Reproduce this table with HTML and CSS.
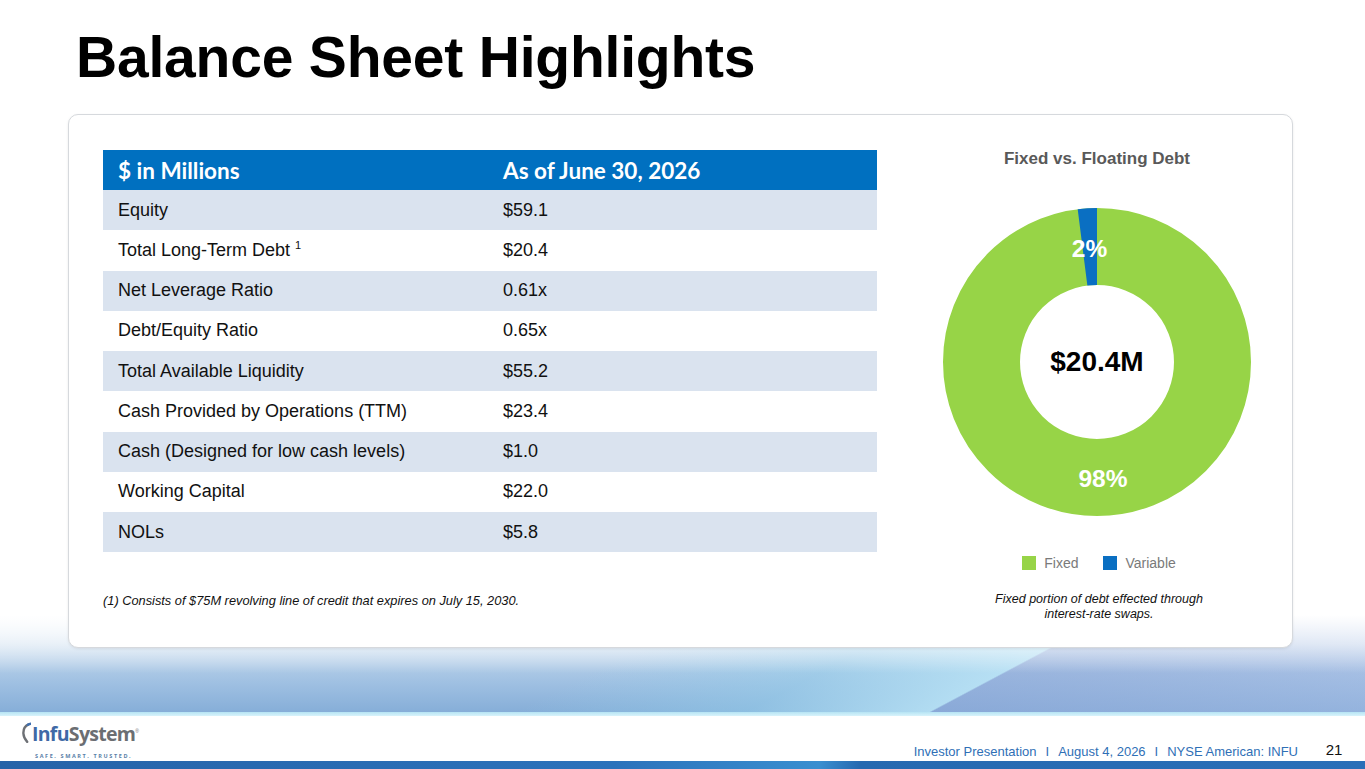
FILE: index.html
```html
<!DOCTYPE html>
<html lang="en">
<head>
<meta charset="utf-8">
<title>Balance Sheet Highlights</title>
<link rel="stylesheet" href="styles.css">
</head>
<body>
<div class="slide">
  <h1 class="title">Balance Sheet Highlights</h1>

  <div class="card">
    <div class="left">
      <div class="table">
        <div class="row head"><div class="c1">$ in Millions</div><div class="c2">As of June 30, 2026</div></div>
        <div class="row alt"><div class="c1">Equity</div><div class="c2">$59.1</div></div>
        <div class="row"><div class="c1">Total Long-Term Debt <sup>1</sup></div><div class="c2">$20.4</div></div>
        <div class="row alt"><div class="c1">Net Leverage Ratio</div><div class="c2">0.61x</div></div>
        <div class="row"><div class="c1">Debt/Equity Ratio</div><div class="c2">0.65x</div></div>
        <div class="row alt"><div class="c1">Total Available Liquidity</div><div class="c2">$55.2</div></div>
        <div class="row"><div class="c1">Cash Provided by Operations (TTM)</div><div class="c2">$23.4</div></div>
        <div class="row alt"><div class="c1">Cash (Designed for low cash levels)</div><div class="c2">$1.0</div></div>
        <div class="row"><div class="c1">Working Capital</div><div class="c2">$22.0</div></div>
        <div class="row alt"><div class="c1">NOLs</div><div class="c2">$5.8</div></div>
      </div>
      <p class="footnote">(1) Consists of $75M revolving line of credit that expires on July 15, 2030.</p>
    </div>

    <div class="right">
      <div class="chart-title">Fixed vs. Floating Debt</div>
      <svg class="donut" width="308" height="308" viewBox="0 0 308 308">
        <circle cx="154" cy="154" r="115.5" fill="none" stroke="#97d447" stroke-width="77"/>
        <path d="M154 0 A154 154 0 0 0 134.70 1.22 L144.35 77.61 A77 77 0 0 1 154 77 Z" fill="#0a6fc2"/>
        <text class="pct" x="146.5" y="49" text-anchor="middle">2%</text>
        <text class="pct" x="160" y="279" text-anchor="middle">98%</text>
        <text class="total" x="154" y="163" text-anchor="middle">$20.4M</text>
      </svg>
      <div class="legend">
        <span class="swatch green"></span><span class="lab">Fixed</span>
        <span class="swatch blue"></span><span class="lab">Variable</span>
      </div>
      <p class="note">Fixed portion of debt effected through<br>interest-rate swaps.</p>
    </div>
  </div>

  <div class="band"></div>
  <div class="cyan-line"></div>

  <div class="footer">
    <div class="logo">
      <div class="logo-main">
        <svg class="logo-arc" width="9" height="22" viewBox="0 0 9 22">
          <path d="M6.6 2.4 C2.5 4.2 1.2 8 1.4 11.5 C1.6 15 3 17.5 5.2 19.8" fill="none" stroke="#6d7075" stroke-width="2.4" stroke-linecap="round"/>
          <path d="M5.8 2.8 C6.9 2.1 7.9 1.8 8.8 1.7" fill="none" stroke="#3f6fb0" stroke-width="2.4" stroke-linecap="round"/>
        </svg>
        <span class="infu">Infu</span><span class="system">System</span><span class="reg">®</span>
      </div>
      <div class="tagline">SAFE. SMART. TRUSTED.</div>
    </div>
    <div class="foot-text">
      <span>Investor Presentation</span><span class="sep">I</span><span>August 4, 2026</span><span class="sep">I</span><span>NYSE American: INFU</span>
    </div>
    <div class="page-num">21</div>
  </div>
  <div class="bottom-bar"></div>
</div>
</body>
</html>
```

FILE: styles.css
```css
* { box-sizing: border-box; }

html, body {
  margin: 0;
  padding: 0;
  background: #ffffff;
}

body {
  font-family: "Liberation Sans", Arial, sans-serif;
  color: #000;
}

.slide {
  width: 1365px;
  height: 769px;
  display: flex;
  flex-direction: column;
  overflow: hidden;
  background:
    linear-gradient(to bottom, #ffffff 0%, rgba(255,255,255,0.6) 30%, rgba(255,255,255,0) 60%) no-repeat 0 615px / 100% 97px,
    linear-gradient(152deg, rgba(150,205,235,0) 0%, rgba(150,205,235,0) 45%, rgba(150,210,236,0.45) 60%, rgba(185,228,246,0.85) 71.8%, rgba(140,165,215,0.55) 72%, rgba(165,185,228,0.45) 100%) no-repeat 0 615px / 100% 97px,
    linear-gradient(to bottom, #e6eff8 0%, #c2d7ec 35%, #9fc0e2 70%, #86aed8 100%) no-repeat 0 615px / 100% 97px,
    #ffffff;
}

.title {
  margin: 0;
  height: 114px;
  padding: 29px 0 0 76px;
  font-size: 57px;
  line-height: 57px;
  font-weight: 700;
  letter-spacing: -0.2px;
  color: #000;
}

.card {
  margin: 0 72px 0 68px;
  height: 534px;
  border: 1px solid #d6d9dd;
  border-radius: 10px;
  background: #fff;
  box-shadow: 0 1px 3px rgba(0,0,0,0.08);
  display: flex;
  flex-shrink: 0;
}

.left {
  width: 774px;
  margin-left: 34px;
  padding-top: 35px;
}

.table {
  width: 774px;
}

.row {
  display: flex;
  height: 40.25px;
  align-items: center;
  font-size: 18px;
  color: #111;
}

.row.alt {
  background: #dae3ef;
}

.row.head {
  height: 40px;
  background: #0070c0;
  color: #fff;
  font-family: Lato, "Open Sans", sans-serif;
  font-weight: 700;
  font-size: 22.5px;
}

.c1 {
  width: 400px;
  padding-left: 15px;
  flex-shrink: 0;
}

.c2 {
  padding-left: 0;
}

sup {
  font-size: 11px;
  vertical-align: 7px;
  line-height: 0;
}

.footnote {
  margin: 41px 0 0 0;
  font-size: 12.8px;
  line-height: 16px;
  font-style: italic;
  color: #111;
}

.right {
  margin-left: 66px;
  width: 308px;
  padding-top: 34px;
  display: flex;
  flex-direction: column;
  align-items: center;
}

.chart-title {
  font-size: 17px;
  line-height: 20px;
  font-weight: 700;
  color: #595959;
}

.donut {
  margin-top: 39px;
  display: block;
}

.pct {
  font-family: "Liberation Sans", Arial, sans-serif;
  font-weight: 700;
  font-size: 24.5px;
  fill: #ffffff;
}

.total {
  font-family: "Liberation Sans", Arial, sans-serif;
  font-weight: 700;
  font-size: 28px;
  fill: #000;
}

.legend {
  margin-top: 39px;
  height: 16px;
  display: flex;
  align-items: center;
  font-size: 14px;
  color: #7a7a7a;
  padding-left: 4px;
}

.swatch {
  width: 14px;
  height: 14px;
  display: inline-block;
}

.swatch.green { background: #97d447; }
.swatch.blue { background: #0a6fc2; margin-left: 25px; }

.lab {
  margin-left: 8px;
}

.note {
  margin: 21px 0 0 0;
  font-size: 12.5px;
  line-height: 15px;
  font-style: italic;
  text-align: center;
  color: #111;
  padding-left: 4px;
}

.band {
  height: 64px;
  flex-shrink: 0;
}

.cyan-line {
  height: 4px;
  background: linear-gradient(to bottom, #b6e4f4, #d8f3fb);
  flex-shrink: 0;
}

.footer {
  height: 45px;
  flex-shrink: 0;
  display: flex;
  align-items: flex-end;
  padding: 0 0 0 22px;
  background: #fff;
}

.logo {
  display: flex;
  flex-direction: column;
  width: 140px;
  margin-bottom: 1px;
}

.logo-main {
  display: flex;
  align-items: flex-end;
  height: 22px;
}

.logo-arc {
  display: block;
  margin-right: 1px;
  margin-bottom: 1px;
}

.infu, .system {
  font-family: "Open Sans", sans-serif;
  font-weight: 700;
  font-size: 19.5px;
  line-height: 22px;
  letter-spacing: -0.7px;
}

.infu { color: #3f69a6; }
.system { color: #6b6e72; }

.reg {
  font-size: 5px;
  color: #6b6e72;
  align-self: flex-start;
  margin-top: 5px;
}

.tagline {
  margin-top: 8px;
  padding-left: 13px;
  font-family: "Open Sans", sans-serif;
  font-weight: 700;
  font-size: 5.5px;
  letter-spacing: 1.6px;
  color: #5a7fa8;
  line-height: 7px;
}

.foot-text {
  margin-left: auto;
  font-size: 13px;
  line-height: 16px;
  color: #2f6fb6;
  margin-bottom: 1px;
  white-space: nowrap;
}

.sep {
  margin: 0 9px;
}

.page-num {
  width: 67px;
  text-align: center;
  font-size: 15px;
  line-height: 18px;
  color: #111;
  margin-bottom: 2px;
  padding-left: 5px;
}

.bottom-bar {
  height: 8px;
  flex-shrink: 0;
  background: linear-gradient(100deg, #2663a8 0%, #2b72bb 45%, #3a8fd0 60%, #2669b0 63%, #2a6fb8 100%);
}
```
